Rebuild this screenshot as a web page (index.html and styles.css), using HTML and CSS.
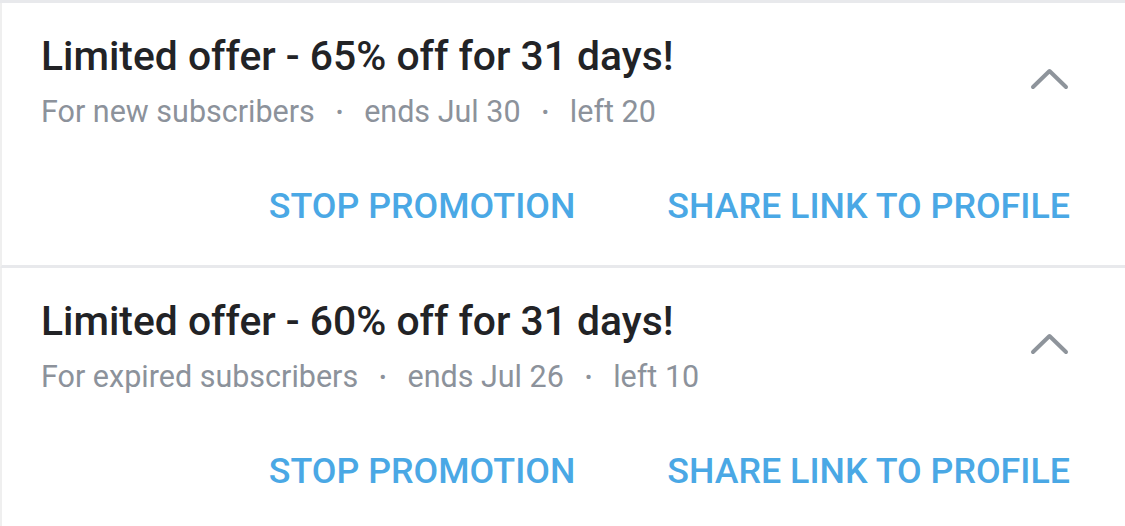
FILE: index.html
```html
<!DOCTYPE html>
<html lang="en">
<head>
    <meta charset="UTF-8">
    <meta name="viewport" content="width=device-width, initial-scale=1.0">
    <title>Promotions</title>
    <link rel="stylesheet" href="styles.css">
</head>
<body>

    <div class="list">
        <!-- first promotion -->
        <div class="promo">
            <div class="promo-head">
                <div class="promo-info">
                    <h2 class="promo-title">Limited offer - 65% off for 31 days!</h2>
                    <p class="promo-meta">
                        <span>For new subscribers</span>
                        <span class="dot">•</span>
                        <span>ends Jul 30</span>
                        <span class="dot">•</span>
                        <span>left 20</span>
                    </p>
                </div>
                <button class="toggle" aria-label="collapse">
                    <svg width="41" height="24" viewBox="0 0 41 24"><path d="M4 20 L20.5 4 L37 20" fill="none" stroke="currentColor" stroke-width="4" stroke-linecap="round" stroke-linejoin="round"/></svg>
                </button>
            </div>
            <div class="promo-actions">
                <button class="link-btn">STOP PROMOTION</button>
                <button class="link-btn">SHARE LINK TO PROFILE</button>
            </div>
        </div>

        <!-- second promotion -->
        <div class="promo">
            <div class="promo-head">
                <div class="promo-info">
                    <h2 class="promo-title">Limited offer - 60% off for 31 days!</h2>
                    <p class="promo-meta">
                        <span>For expired subscribers</span>
                        <span class="dot">•</span>
                        <span>ends Jul 26</span>
                        <span class="dot">•</span>
                        <span>left 10</span>
                    </p>
                </div>
                <button class="toggle" aria-label="collapse">
                    <svg width="41" height="24" viewBox="0 0 41 24"><path d="M4 20 L20.5 4 L37 20" fill="none" stroke="currentColor" stroke-width="4" stroke-linecap="round" stroke-linejoin="round"/></svg>
                </button>
            </div>
            <div class="promo-actions">
                <button class="link-btn">STOP PROMOTION</button>
                <button class="link-btn">SHARE LINK TO PROFILE</button>
            </div>
        </div>
    </div>

</body>
</html>
```

FILE: styles.css
```css
body {
    font-family: Roboto, "Noto Sans", sans-serif;
    margin: 0;
    background-color: #fff;
}
.list {
    border-top: 3px solid #e8e9ec;
}
.promo {
    height: 265px;
    padding: 29px 55px 0 39px;
    border-left: 2px solid #efefef;
    border-bottom: 3px solid #e8e9ec;
    box-sizing: border-box;
}
.promo-head {
    display: flex;
    justify-content: space-between;
    align-items: center;
}
.promo-title {
    margin: 0;
    font-size: 40.8px;
    font-weight: 500;
    line-height: 48px;
    color: #222326;
}
.promo-meta {
    margin: 12px 0 0;
    font-size: 30.5px;
    line-height: 40px;
    color: #8c929b;
}
.dot {
    margin: 0 13.5px;
    font-size: 21px;
    vertical-align: 3px;
}
.toggle {
    background: none;
    border: none;
    padding: 0;
    margin-bottom: 6px;
    color: #8e949b;
    cursor: pointer;
    display: flex;
}
.promo-actions {
    display: flex;
    justify-content: flex-end;
    gap: 92px;
    margin-top: 54px;
}
.link-btn {
    background: none;
    border: none;
    padding: 0;
    font-family: Roboto, "Noto Sans", sans-serif;
    font-size: 35.8px;
    font-weight: 500;
    line-height: 40px;
    color: #4aa8e5;
    cursor: pointer;
}
```
